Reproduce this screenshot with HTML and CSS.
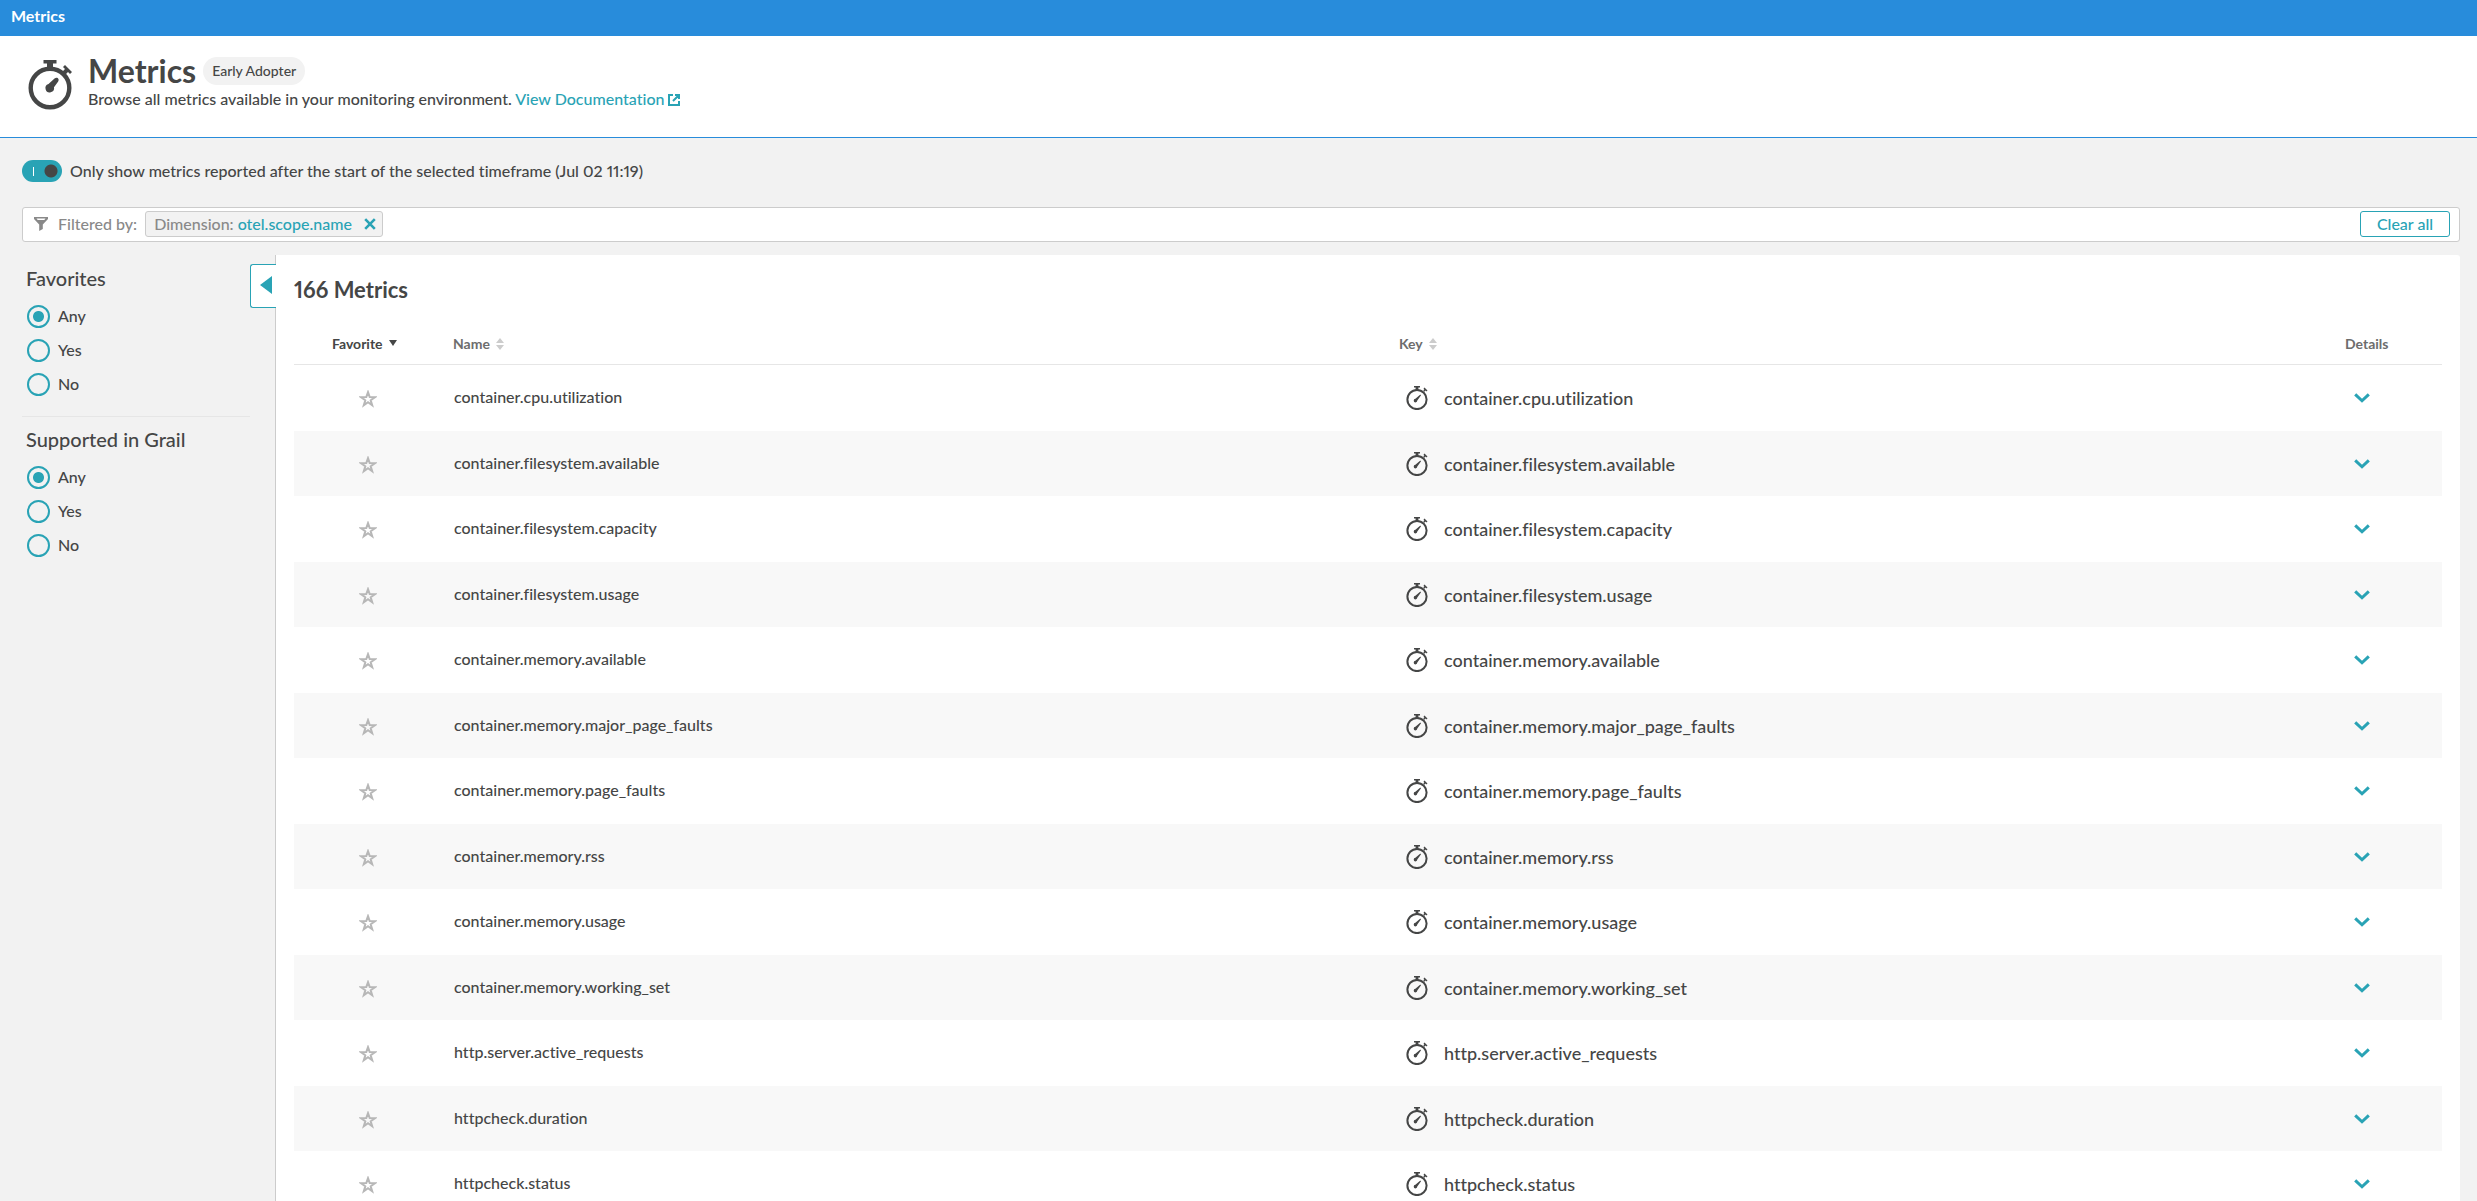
FILE: index.html
```
<!DOCTYPE html>
<html lang="en">
<head>
  <meta charset="UTF-8" />
  <meta name="viewport" content="width=device-width, initial-scale=1.0" />
  <title>Metrics</title>
  <link rel="stylesheet" href="styles.css">
</head>
<body>
  <!-- shared icons -->
  <svg class="sprite" aria-hidden="true">
    <symbol id="stopwatch" viewBox="0 0 22 24">
      <circle cx="11" cy="13.5" r="9.6" fill="none" stroke="currentColor" stroke-width="2" />
      <path d="M8 0h6v1.6h-1.6v3H9.6v-3H8zM17.3 4.2l1-1-.8-.8 1-1 3 3-1 1-.8-.8-1.2 1.2zM9.4 12.8l4.4-3.9c.8-.6 1.5.1.9.9l-3.4 4.8a1.8 1.8 0 1 1-1.9-1.8z" fill="currentColor" />
    </symbol>
    <symbol id="star" viewBox="0 0 18 18">
      <path d="M9 2.2l1.7 4.9 5.2.1-4.2 3.1 1.5 5-4.2-3-4.2 3 1.5-5-4.2-3.1 5.2-.1z" fill="none" stroke="currentColor" stroke-width="2" />
    </symbol>
    <symbol id="chevron" viewBox="0 0 16 10">
      <path d="M1.2 1.4L8 7.8l6.8-6.4" fill="none" stroke="currentColor" stroke-width="3" />
    </symbol>
    <symbol id="sort" viewBox="0 0 8 12">
      <path d="M4 0l4 5H0zM4 12l4-5H0z" fill="currentColor" />
    </symbol>
  </svg>

  <nav class="topbar">Metrics</nav>

  <header class="header">
    <svg class="header-icon" viewBox="0 0 44 50" aria-hidden="true">
      <circle cx="22" cy="28" r="19.3" fill="none" stroke="currentColor" stroke-width="4.4" />
      <path d="M15.5 0h13v3.500H25V8h-6V3.500h-3.500zM34 12l3-3-2-2 2-2 7 7-2 2-2-2-3 3zM20.5 24l6-5.500c2.500-2.200 5.500.5 3.500 3.200l-4 5.600a4.300 4.300 0 1 1-5.500-3.300z" fill="currentColor" />
    </svg>
    <div>
      <div class="title-row">
        <h1>Metrics</h1>
        <span class="badge">Early Adopter</span>
      </div>
      <p class="intro">Browse all metrics available in your monitoring environment.
        <a href="#">View Documentation<svg class="ext-icon" viewBox="0 0 12 12" aria-hidden="true"><path d="M5 1H1v10h10V7M7 1h4v4M10.8 1.2L5 7" fill="none" stroke="currentColor" stroke-width="2" /></svg></a>
      </p>
    </div>
  </header>

  <main class="content">
    <label class="toggle">
      <input type="checkbox" role="switch" checked>
      <span>Only show metrics reported after the start of the selected timeframe (Jul 02 11:19)</span>
    </label>

    <div class="filterbar">
      <svg class="filter-icon" viewBox="0 0 14 14" aria-hidden="true"><path d="M0 0h14v2L8.8 7.5V12L5.2 14V7.5L0 2zM2.5 1.6l1.2 1.4h6.6l1.2-1.4z" fill="currentColor" fill-rule="evenodd" /></svg>
      <span class="filter-label">Filtered by:</span>
      <span class="tag">Dimension: <b>otel.scope.name</b>
        <button class="tag-remove" aria-label="Remove filter">
          <svg viewBox="0 0 12 12"><path d="M1.2 1.2l9.6 9.6M10.8 1.2L1.2 10.8" stroke="currentColor" stroke-width="2.6" /></svg>
        </button>
      </span>
      <button class="clear">Clear all</button>
    </div>

    <div class="columns">
      <aside class="sidebar">
        <fieldset>
          <legend>Favorites</legend>
          <label><input type="radio" name="favorites" checked>Any</label>
          <label><input type="radio" name="favorites">Yes</label>
          <label><input type="radio" name="favorites">No</label>
        </fieldset>
        <fieldset>
          <legend>Supported in Grail</legend>
          <label><input type="radio" name="grail" checked>Any</label>
          <label><input type="radio" name="grail">Yes</label>
          <label><input type="radio" name="grail">No</label>
        </fieldset>
      </aside>

      <section class="panel">
        <button class="collapse" aria-label="Collapse filters">
          <svg viewBox="0 0 12 18"><path d="M12 0v18L0 9z" fill="currentColor" /></svg>
        </button>
        <h2>166 Metrics</h2>
        <table>
          <colgroup>
            <col class="col-fav"><col><col><col class="col-details">
          </colgroup>
          <thead>
            <tr>
              <th class="fav"><button class="sort active">Favorite <svg viewBox="0 0 8 12"><path d="M0 2h8L4 8z" fill="currentColor" /></svg></button></th>
              <th><button class="sort">Name <svg><use href="#sort" /></svg></button></th>
              <th><button class="sort">Key <svg><use href="#sort" /></svg></button></th>
              <th>Details</th>
            </tr>
          </thead>
          <tbody>
            <tr>
              <td class="fav"><button class="star" aria-label="Add to favorites"><svg><use href="#star" /></svg></button></td>
              <td class="name">container.cpu.utilization</td>
              <td><div class="key"><svg><use href="#stopwatch" /></svg>container.cpu.utilization</div></td>
              <td><button class="expand" aria-label="Show details"><svg><use href="#chevron" /></svg></button></td>
            </tr>
            <tr>
              <td class="fav"><button class="star" aria-label="Add to favorites"><svg><use href="#star" /></svg></button></td>
              <td class="name">container.filesystem.available</td>
              <td><div class="key"><svg><use href="#stopwatch" /></svg>container.filesystem.available</div></td>
              <td><button class="expand" aria-label="Show details"><svg><use href="#chevron" /></svg></button></td>
            </tr>
            <tr>
              <td class="fav"><button class="star" aria-label="Add to favorites"><svg><use href="#star" /></svg></button></td>
              <td class="name">container.filesystem.capacity</td>
              <td><div class="key"><svg><use href="#stopwatch" /></svg>container.filesystem.capacity</div></td>
              <td><button class="expand" aria-label="Show details"><svg><use href="#chevron" /></svg></button></td>
            </tr>
            <tr>
              <td class="fav"><button class="star" aria-label="Add to favorites"><svg><use href="#star" /></svg></button></td>
              <td class="name">container.filesystem.usage</td>
              <td><div class="key"><svg><use href="#stopwatch" /></svg>container.filesystem.usage</div></td>
              <td><button class="expand" aria-label="Show details"><svg><use href="#chevron" /></svg></button></td>
            </tr>
            <tr>
              <td class="fav"><button class="star" aria-label="Add to favorites"><svg><use href="#star" /></svg></button></td>
              <td class="name">container.memory.available</td>
              <td><div class="key"><svg><use href="#stopwatch" /></svg>container.memory.available</div></td>
              <td><button class="expand" aria-label="Show details"><svg><use href="#chevron" /></svg></button></td>
            </tr>
            <tr>
              <td class="fav"><button class="star" aria-label="Add to favorites"><svg><use href="#star" /></svg></button></td>
              <td class="name">container.memory.major_page_faults</td>
              <td><div class="key"><svg><use href="#stopwatch" /></svg>container.memory.major_page_faults</div></td>
              <td><button class="expand" aria-label="Show details"><svg><use href="#chevron" /></svg></button></td>
            </tr>
            <tr>
              <td class="fav"><button class="star" aria-label="Add to favorites"><svg><use href="#star" /></svg></button></td>
              <td class="name">container.memory.page_faults</td>
              <td><div class="key"><svg><use href="#stopwatch" /></svg>container.memory.page_faults</div></td>
              <td><button class="expand" aria-label="Show details"><svg><use href="#chevron" /></svg></button></td>
            </tr>
            <tr>
              <td class="fav"><button class="star" aria-label="Add to favorites"><svg><use href="#star" /></svg></button></td>
              <td class="name">container.memory.rss</td>
              <td><div class="key"><svg><use href="#stopwatch" /></svg>container.memory.rss</div></td>
              <td><button class="expand" aria-label="Show details"><svg><use href="#chevron" /></svg></button></td>
            </tr>
            <tr>
              <td class="fav"><button class="star" aria-label="Add to favorites"><svg><use href="#star" /></svg></button></td>
              <td class="name">container.memory.usage</td>
              <td><div class="key"><svg><use href="#stopwatch" /></svg>container.memory.usage</div></td>
              <td><button class="expand" aria-label="Show details"><svg><use href="#chevron" /></svg></button></td>
            </tr>
            <tr>
              <td class="fav"><button class="star" aria-label="Add to favorites"><svg><use href="#star" /></svg></button></td>
              <td class="name">container.memory.working_set</td>
              <td><div class="key"><svg><use href="#stopwatch" /></svg>container.memory.working_set</div></td>
              <td><button class="expand" aria-label="Show details"><svg><use href="#chevron" /></svg></button></td>
            </tr>
            <tr>
              <td class="fav"><button class="star" aria-label="Add to favorites"><svg><use href="#star" /></svg></button></td>
              <td class="name">http.server.active_requests</td>
              <td><div class="key"><svg><use href="#stopwatch" /></svg>http.server.active_requests</div></td>
              <td><button class="expand" aria-label="Show details"><svg><use href="#chevron" /></svg></button></td>
            </tr>
            <tr>
              <td class="fav"><button class="star" aria-label="Add to favorites"><svg><use href="#star" /></svg></button></td>
              <td class="name">httpcheck.duration</td>
              <td><div class="key"><svg><use href="#stopwatch" /></svg>httpcheck.duration</div></td>
              <td><button class="expand" aria-label="Show details"><svg><use href="#chevron" /></svg></button></td>
            </tr>
            <tr>
              <td class="fav"><button class="star" aria-label="Add to favorites"><svg><use href="#star" /></svg></button></td>
              <td class="name">httpcheck.status</td>
              <td><div class="key"><svg><use href="#stopwatch" /></svg>httpcheck.status</div></td>
              <td><button class="expand" aria-label="Show details"><svg><use href="#chevron" /></svg></button></td>
            </tr>
          </tbody>
        </table>
      </section>
    </div>
  </main>
</body>
</html>
```
FILE: styles.css
```
* {
  box-sizing: border-box;
}
body {
  margin: 0;
  height: 100vh;
  overflow: hidden;
  display: flex;
  flex-direction: column;
  font-family: Lato, "Open Sans", sans-serif;
  font-size: 16px;
  font-weight: 500;
  font-variant-ligatures: none;
  font-variant-numeric: proportional-nums;
  line-height: 20px;
  color: #454646;
  background: #f2f2f2;
}
button {
  font: inherit;
  color: inherit;
  background: none;
  border: none;
  padding: 0;
  cursor: pointer;
}
svg {
  flex: none;
}
.sprite {
  display: none;
}

/* top bar and page header */
.topbar {
  flex: none;
  height: 36px;
  padding: 6px 11px;
  background: #288cdb;
  color: white;
  font-weight: 700;
}
.header {
  flex: none;
  display: flex;
  gap: 16px;
  height: 102px;
  padding: 17px 28px;
  background: white;
  border-bottom: 1px solid #288cdb;
}
.header-icon {
  width: 44px;
  height: 50px;
  margin-top: 7px;
}
.title-row {
  display: flex;
  align-items: center;
  gap: 7px;
  height: 36px;
}
h1 {
  margin: 0;
  font-size: 32px;
  line-height: 36px;
}
.badge {
  padding: 4px 9px;
  border-radius: 14px;
  background: #f2f2f2;
  font-size: 14px;
}
.intro {
  margin: 0;
}
a {
  color: #29a3b5;
  text-decoration: none;
}
.ext-icon {
  width: 12px;
  height: 12px;
  margin-left: 4px;
  vertical-align: -1px;
}

/* filters */
.content {
  flex: 1;
  min-height: 0;
  display: flex;
  flex-direction: column;
  padding: 22px 17px 0 22px;
}
.toggle {
  display: flex;
  align-items: center;
  gap: 8px;
  height: 22px;
}
.toggle input {
  appearance: none;
  width: 40px;
  height: 22px;
  margin: 0;
  border-radius: 11px;
  background:
    radial-gradient(circle at 29px 11px, #454646 6px, transparent 7px),
    linear-gradient(white, white) 11px 7px / 1px 9px no-repeat,
    #29a3b5;
}
.filterbar {
  flex: none;
  display: flex;
  align-items: center;
  height: 35px;
  margin-top: 25px;
  padding: 0 9px 1px 11px;
  background: white;
  border: 1px solid #ccc;
  border-radius: 3px;
  color: #898989;
}
.filter-icon {
  width: 14px;
  height: 14px;
}
.filter-label {
  margin: 0 8px 0 10px;
}
.tag {
  display: flex;
  align-items: center;
  gap: 4px;
  height: 26px;
  padding: 0 6px 1px 8px;
  background: #f2f2f2;
  border: 1px solid #ccc;
  border-radius: 3px;
}
.tag b {
  font-weight: 500;
  color: #29a3b5;
}
.tag-remove {
  margin-left: 8px;
  color: #29a3b5;
}
.tag-remove svg {
  display: block;
  width: 12px;
  height: 12px;
}
.clear {
  width: 90px;
  height: 26px;
  padding-bottom: 1px;
  margin-left: auto;
  border: 1px solid #29a3b5;
  border-radius: 3px;
  color: #29a3b5;
}
.columns {
  flex: 1;
  min-height: 0;
  display: flex;
  margin-top: 13px;
}
.sidebar {
  flex: none;
  width: 253px;
  padding: 11px 25px 0 0;
}
fieldset {
  display: flex;
  flex-direction: column;
  gap: 12px;
  margin: 0 0 10px;
  padding: 0 0 21px 4px;
  border: none;
  border-bottom: 1px solid #e6e6e6;
}
fieldset:last-child {
  border: none;
}
legend {
  padding: 0;
  margin-bottom: 15px;
  font-size: 20px;
  line-height: 24px;
}
fieldset label {
  display: flex;
  align-items: center;
  gap: 8px;
  height: 22px;
}
fieldset input {
  appearance: none;
  width: 23px;
  height: 23px;
  margin: 0 0 0 1px;
  border: 2px solid #29a3b5;
  border-radius: 50%;
}
fieldset input:checked {
  background: radial-gradient(circle, #29a3b5 5px, transparent 6px);
}

/* metrics table */
.panel {
  flex: 1;
  position: relative;
  padding: 22px 18px 0;
  background: white;
  border-left: 1px solid #ccc;
  border-radius: 0 3px 0 0;
}
.collapse {
  position: absolute;
  top: 9px;
  left: -26px;
  width: 26px;
  height: 44px;
  padding: 0 0 3px 9px;
  background: white;
  border: 1px solid #29a3b5;
  border-right: none;
  border-radius: 3px 0 0 3px;
  color: #29a3b5;
}
.collapse svg {
  display: block;
  width: 12px;
  height: 18px;
}
h2 {
  margin: 0;
  font-size: 22px;
  line-height: 26px;
}
table {
  width: 100%;
  margin-top: 22px;
  table-layout: fixed;
  border-collapse: separate;
  border-spacing: 0;
}
.col-fav {
  width: 154px;
}
.col-details {
  width: 102px;
}
th {
  height: 40px;
  padding: 0 5px 1px;
  border-bottom: 1px solid #e6e6e6;
  text-align: left;
  font-size: 14px;
  color: #6d6d6d;
}
th.fav {
  padding-left: 38px;
}
.sort {
  display: flex;
  align-items: center;
  gap: 6px;
  font-weight: 700;
}
.sort svg {
  width: 8px;
  height: 12px;
  color: #ccc;
}
.sort.active,
.sort.active svg {
  color: #454646;
}
td {
  height: 66px;
  padding: 0 6px;
}
tbody tr:nth-child(even) td {
  height: 65px;
  background: #f8f8f8;
}
td.name {
  padding-bottom: 2px;
}
td.fav {
  padding: 2px 6px 0 0;
}
.star {
  display: block;
  margin: 0 auto;
}
.star svg {
  display: block;
  width: 18px;
  height: 18px;
  color: #b7b7b7;
}
.key {
  display: flex;
  align-items: center;
  gap: 16px;
  padding-left: 6px;
  font-size: 18px;
}
.key svg {
  width: 22px;
  height: 24px;
}
.expand {
  display: block;
  margin-left: 8px;
  color: #29a3b5;
}
.expand svg {
  display: block;
  width: 16px;
  height: 10px;
}
```
